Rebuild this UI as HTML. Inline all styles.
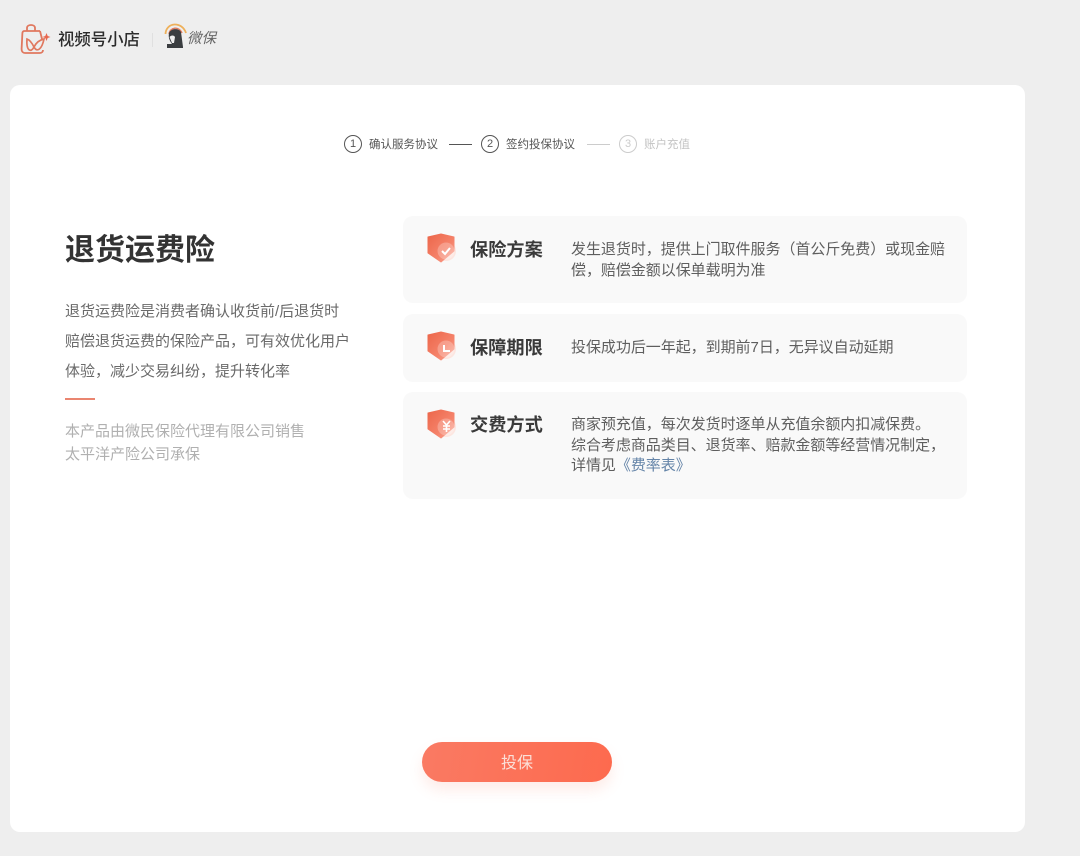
<!DOCTYPE html>
<html lang="zh"><head><meta charset="utf-8"><style>
html,body{margin:0;padding:0}
body{width:1080px;height:856px;background:#eeeeee;position:relative;overflow:hidden;font-family:"Liberation Sans","Noto Sans CJK SC",sans-serif;color:#555}
#w{position:absolute;left:0;top:0;width:1080px;height:856px;filter:blur(.35px)}
.a{position:absolute;white-space:nowrap}
.panel{position:absolute;left:10px;top:85px;width:1015px;height:747px;background:#fff;border-radius:10px}
.card{position:absolute;left:403px;width:564px;background:#f9f9f9;border-radius:10px}
.h{position:absolute;left:470px;font-size:18.2px;line-height:24px;font-weight:700;color:#3a3a3a;white-space:nowrap}
.d{position:absolute;left:571px;font-size:15px;letter-spacing:-.04px;line-height:20.5px;color:#5e5e5e;white-space:nowrap}
.s{font-size:11.5px;line-height:16px;color:#555}
.c{position:absolute;width:16px;height:16px;border:1px solid #555;border-radius:50%;text-align:center;font-size:11px;line-height:16px;color:#555}
.l{position:absolute;height:1px;top:144px;width:23px;background:#555}
.p{position:absolute;left:65px;font-size:15px;color:#6a6a6a;white-space:nowrap;line-height:20px}
.g{color:#b0b0b0}
svg{position:absolute}
</style></head><body><div id="w">
<svg style="left:19px;top:22px" width="34" height="34" viewBox="0 0 34 34" fill="none">
<path d="M21 9 H5.500 C4 9 3.500 10 3.400 11 L2.600 27 C2.500 29.500 4 31 6 31 H21 C23 31 24 29.500 24 28" stroke="#e0785f" stroke-width="1.800"/>
<path d="M21 9 L23 17" stroke="#e0785f" stroke-width="1.800"/>
<path d="M8 9 V6 C8 2 16 2 16 6 V9" stroke="#e0785f" stroke-width="1.800"/>
<path d="M8 17 C7 29 12 31 15 25 C18 31 23 27 25 17 C20 18 17 21 15 25 C13 21 11 18 8 17Z" stroke="#e0785f" stroke-width="1.700"/>
<path d="M27.500 11 L28.700 14 L31.500 15 L28.700 16 L27.500 19 L26.300 16 L23.500 15 L26.300 14Z" fill="#e8674e"/>
</svg>
<div class="a" style="left:58px;top:30px;font-size:16.4px;line-height:20px;font-weight:500;color:#2b2b2b">视频号小店</div>
<div class="a" style="left:152px;top:33px;width:1px;height:14px;background:#e0e0e0"></div>
<svg style="left:163px;top:21px" width="26" height="28" viewBox="0 0 26 28" fill="none">
<path d="M2.500 13 C3 1 19 0 23 12" stroke="#eeb05a" stroke-width="1.800"/>
<path d="M6 13 C7 6 16 5 19 12" stroke="#de7a5d" stroke-width="1.400"/>
<path d="M4 27 V23 H9 C7 20 5 17 6 12 C8 7 16 7 18 11 L20 26 V27Z" fill="#3a3d40"/>
<path d="M6.500 16 C8 14 11 14 12 16 L11 22 H9Z" fill="#eee"/>
</svg>
<div class="a" style="left:187px;top:29px;font-size:14.500px;line-height:20px;font-style:italic;color:#666">微保</div>

<div class="panel"></div>

<div class="c" style="left:344px;top:135px">1</div>
<div class="a s" style="left:369px;top:137px">确认服务协议</div>
<div class="l" style="left:449px"></div>
<div class="c" style="left:481px;top:135px">2</div>
<div class="a s" style="left:506px;top:137px">签约投保协议</div>
<div class="l" style="left:587px;background:#ccc"></div>
<div class="c" style="left:619px;top:135px;border-color:#ccc;color:#ccc">3</div>
<div class="a s" style="left:644px;top:137px;color:#c4c4c4">账户充值</div>

<div class="a" style="left:65px;top:233px;font-size:30px;line-height:36px;font-weight:700;color:#333">退货运费险</div>
<div class="p" style="top:302px">退货运费险是消费者确认收货前/后退货时</div>
<div class="p" style="top:332px">赔偿退货运费的保险产品，可有效优化用户</div>
<div class="p" style="top:362px">体验，减少交易纠纷，提升转化率</div>
<div class="a" style="left:65px;top:398px;width:30px;height:2px;background:#ea8570"></div>
<div class="p g" style="top:422px">本产品由微民保险代理有限公司销售</div>
<div class="p g" style="top:445px">太平洋产险公司承保</div>

<div class="card" style="top:216px;height:87px"></div>
<div class="card" style="top:314px;height:68px"></div>
<div class="card" style="top:392px;height:107px"></div>

<svg style="left:426px;top:233px" width="34" height="32" viewBox="0 0 34 32"><defs><linearGradient id="g" x1="0" y1="0" x2="1" y2="1"><stop offset="0" stop-color="#ec664a"/><stop offset=".6" stop-color="#f5826a"/><stop offset="1" stop-color="#fba897"/></linearGradient></defs>
<circle cx="20" cy="18" r="10" fill="#fde6e0"/>
<path d="M2 4 L15 1 L28 4 V18 L15 29 L2 20Z" fill="url(#g)" stroke="url(#g)" stroke-width="1" stroke-linejoin="round"/>
<circle cx="20" cy="18" r="8.500" fill="#fff" opacity=".25"/>
<path d="M16 18 L19 21 L24 15" stroke="#fff" stroke-width="2" fill="none"/></svg>
<svg style="left:426px;top:331px" width="34" height="32" viewBox="0 0 34 32">
<circle cx="20" cy="18" r="10" fill="#fde6e0"/>
<path d="M2 4 L15 1 L28 4 V18 L15 29 L2 20Z" fill="url(#g)" stroke="url(#g)" stroke-width="1" stroke-linejoin="round"/>
<circle cx="20" cy="18" r="8.500" fill="#fff" opacity=".25"/>
<path d="M18 14 V20 H24" stroke="#fff" stroke-width="2" fill="none"/></svg>
<svg style="left:426px;top:409px" width="34" height="32" viewBox="0 0 34 32">
<circle cx="20" cy="18" r="10" fill="#fde6e0"/>
<path d="M2 4 L15 1 L28 4 V18 L15 29 L2 20Z" fill="url(#g)" stroke="url(#g)" stroke-width="1" stroke-linejoin="round"/>
<circle cx="20" cy="18" r="8.500" fill="#fff" opacity=".25"/>
<path d="M17 12 L20.500 16 L24 12 M20.500 16 V23 M17 17 H24 M17 20 H24" stroke="#fff" stroke-width="1.600" fill="none"/></svg>

<div class="h" style="top:238px">保险方案</div>
<div class="d" style="top:240px">发生退货时，提供上门取件服务（首公斤免费）或现金赔<br>偿，赔偿金额以保单载明为准</div>
<div class="h" style="top:336px">保障期限</div>
<div class="d" style="top:338px">投保成功后一年起，到期前7日，无异议自动延期</div>
<div class="h" style="top:413px">交费方式</div>
<div class="d" style="top:415px">商家预充值，每次发货时逐单从充值余额内扣减保费。<br>综合考虑商品类目、退货率、赔款金额等经营情况制定，<br>详情见<span style="color:#6484a8">《费率表》</span></div>

<div class="a" style="left:422px;top:742px;width:190px;border-radius:20px;background:linear-gradient(100deg,#fa7a63,#fd6a4e);box-shadow:0 8px 14px rgba(250,120,90,.14);color:#fbe0d8;font-size:16px;line-height:41px;padding-top:1px;height:39px;text-align:center">投保</div>
</div></body></html>
